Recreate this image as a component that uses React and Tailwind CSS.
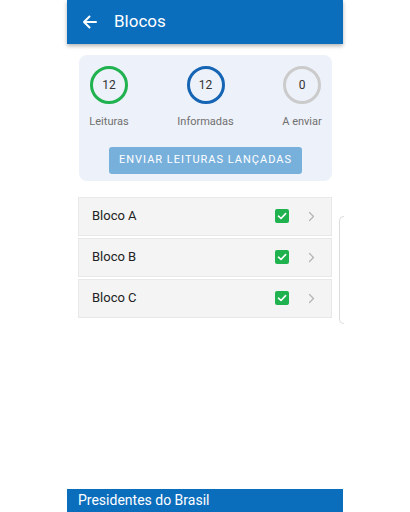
import React from 'react';

const stats = [
    { value: 12, label: 'Leituras', ring: 'border-[#1fb24f]' },
    { value: 12, label: 'Informadas', ring: 'border-[#1565b4]' },
    { value: 0, label: 'A enviar', ring: 'border-[#cbcbcb]' },
];

const blocos = ['Bloco A', 'Bloco B', 'Bloco C'];

const CheckBox = () => (
    <div className="w-[14px] h-[14px] rounded-[2px] bg-[#1fb24f] flex items-center justify-center">
        <svg width="10" height="10" viewBox="0 0 10 10" fill="none">
            <path d="M1.5 5.2 L4 7.5 L8.6 2.6" stroke="white" strokeWidth="1.6" strokeLinecap="round" strokeLinejoin="round" />
        </svg>
    </div>
);

const Chevron = () => (
    <svg width="7" height="11" viewBox="0 0 7 11" fill="none">
        <path d="M1.5 1.5 L5.5 5.5 L1.5 9.5" stroke="#b3b3b3" strokeWidth="1.2" strokeLinecap="round" strokeLinejoin="round" />
    </svg>
);

export default function App() {
    return (
        <div className="w-[410px] h-[512px] bg-white relative overflow-hidden font-['Roboto',sans-serif]">
            <div className="ml-[67px] w-[276px] h-full flex flex-col">
                {/* top bar */}
                <div className="h-[44px] bg-[#0b6ebd] flex items-center px-[15px] shadow-[0_2px_4px_rgba(0,0,0,0.3)] z-10">
                    <svg width="15" height="14" viewBox="0 0 15 14" fill="none">
                        <path d="M14 7 H2 M7.5 1.5 L2 7 L7.5 12.5" stroke="white" strokeWidth="2" strokeLinecap="round" strokeLinejoin="round" />
                    </svg>
                    <span className="ml-[17px] text-white text-[17px]">Blocos</span>
                </div>

                <div className="flex-1 px-[11px] pt-[11px]">
                    {/* summary card */}
                    <div className="ml-[1px] bg-[#edf1f9] rounded-[8px] pt-[11px] pb-[7px] flex flex-col items-center">
                        <div className="w-full flex justify-between px-[10px]">
                            {stats.map((s) => (
                                <div key={s.label} className="w-[40px] flex flex-col items-center">
                                    <div className={`w-[38px] h-[38px] rounded-full border-[3px] ${s.ring} flex items-center justify-center text-[12px] text-[#333]`}>
                                        {s.value}
                                    </div>
                                    <span className="mt-[10px] text-[11px] text-[#707070] whitespace-nowrap">{s.label}</span>
                                </div>
                            ))}
                        </div>
                        <button className="mt-[16px] w-[193px] h-[27px] rounded-[3px] bg-[#78b0dc] text-white text-[11px] tracking-[1px]">
                            ENVIAR LEITURAS LANÇADAS
                        </button>
                    </div>

                    {/* list */}
                    <div className="mt-[16px] flex flex-col gap-[2px]">
                        {blocos.map((b) => (
                            <div key={b} className="h-[39px] bg-[#f4f4f4] border border-[#e8e8e8] flex items-center pl-[13px] pr-[16px]">
                                <span className="flex-1 text-[13px] text-[#222]">{b}</span>
                                <CheckBox />
                                <div className="ml-[19px]">
                                    <Chevron />
                                </div>
                            </div>
                        ))}
                    </div>
                </div>

                {/* bottom bar */}
                <div className="h-[23px] bg-[#0b6ebd] flex items-center px-[11px]">
                    <span className="text-white text-[14px]">Presidentes do Brasil</span>
                </div>
            </div>

            {/* partly visible panel edge */}
            <div className="absolute left-[339px] top-[216px] w-[5px] h-[108px] border-l border-y border-[#dcdcdc] rounded-l-[5px]" />
        </div>
    );
}
